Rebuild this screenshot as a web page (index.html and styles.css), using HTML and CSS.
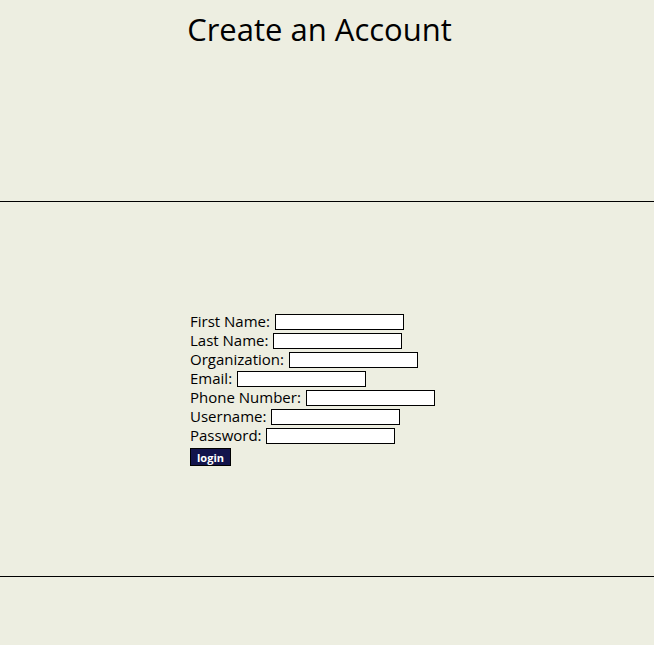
FILE: index.html
```html
<!DOCTYPE html>
<html lang="en">
<head>
<meta charset="utf-8">
<title>Create an Account</title>
<link rel="stylesheet" href="styles.css">
</head>
<body>
<header class="site-header">
  <h1 class="title">Create an Account</h1>
</header>
<main class="content">
  <form class="signup">
    <div class="row"><label>First Name:</label> <input type="text" class="field"></div>
    <div class="row"><label>Last Name:</label> <input type="text" class="field"></div>
    <div class="row"><label>Organization:</label> <input type="text" class="field"></div>
    <div class="row"><label>Email:</label> <input type="text" class="field"></div>
    <div class="row"><label>Phone Number:</label> <input type="text" class="field"></div>
    <div class="row"><label>Username:</label> <input type="text" class="field"></div>
    <div class="row"><label>Password:</label> <input type="password" class="field"></div>
    <button type="button" class="login">login</button>
  </form>
</main>
<footer class="site-footer"></footer>
</body>
</html>
```
FILE: styles.css
```css
html, body {
  margin: 0;
  padding: 0;
  background: #edeee1;
}
body {
  font-family: "Open Sans", "Liberation Sans", sans-serif;
  color: #000;
}
.site-header {
  height: 201px;
  border-bottom: 1px solid #000;
  padding-right: 15px;
  text-align: center;
}
.title {
  margin: 0;
  padding-top: 9px;
  font-size: 31px;
  font-weight: 500;
  line-height: 40px;
}
.content {
  height: 374px;
  border-bottom: 1px solid #000;
  display: flex;
  align-items: center;
  padding-left: 190px;
}
.signup {
  font-size: 15px;
  font-weight: 500;
}
.row {
  height: 19px;
  line-height: 19px;
}
.field {
  box-sizing: border-box;
  width: 129px;
  height: 16px;
  border: 1px solid #000;
  background: #fff;
  padding: 0;
  margin: 0 0 0 1px;
  vertical-align: 1px;
}
.login {
  display: block;
  margin-top: 3px;
  box-sizing: border-box;
  width: 41px;
  height: 18px;
  padding: 0;
  border: 1px solid #000;
  background: #13144c;
  color: #fff;
  font-family: "Open Sans", sans-serif;
  font-size: 11px;
  font-weight: 700;
}
.site-footer {
  height: 68px;
}
```
